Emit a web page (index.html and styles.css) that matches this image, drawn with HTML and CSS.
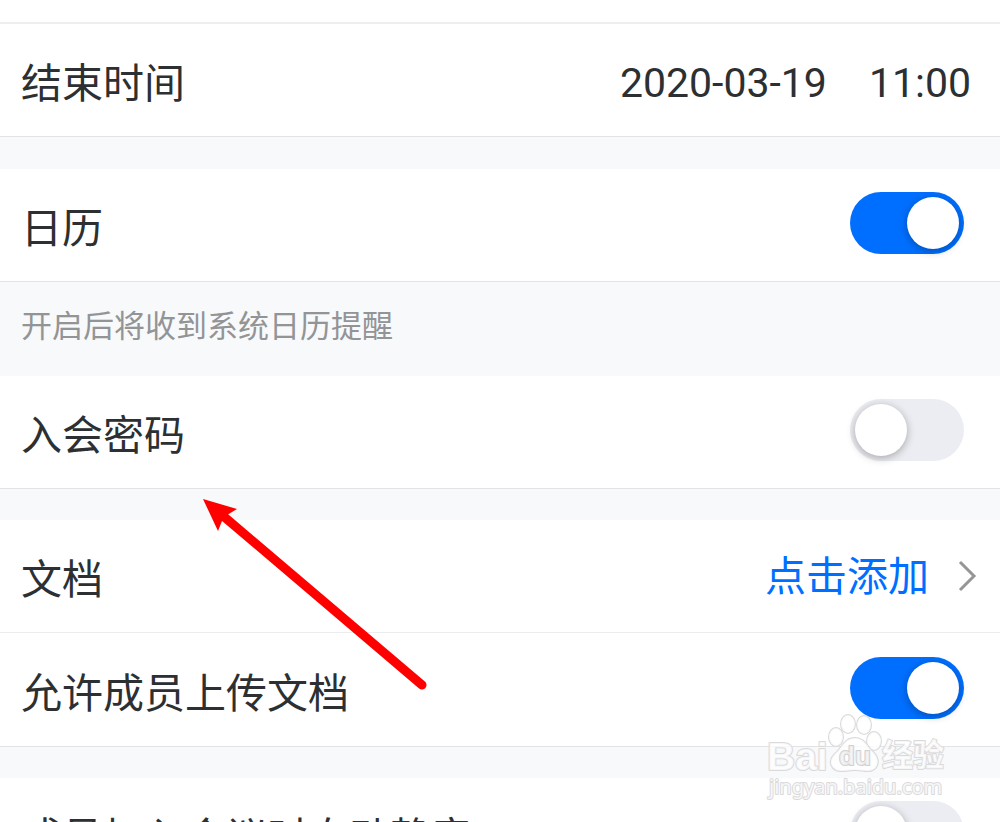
FILE: index.html
```html
<!DOCTYPE html>
<html lang="zh-CN">
<head>
<meta charset="utf-8">
<meta name="viewport" content="width=device-width, initial-scale=1">
<title>会议设置</title>
<link rel="stylesheet" href="styles.css">
</head>
<body>
<main class="screen">
  <section class="group group-first">
    <div class="row">
      <span class="label">结束时间</span>
      <time class="time" datetime="2020-03-19T11:00"><span>2020-03-19</span><span>11:00</span></time>
    </div>
  </section>
  <section class="group">
    <div class="row">
      <label class="label" for="calendar">日历</label>
      <input class="switch" type="checkbox" id="calendar" checked>
    </div>
  </section>
  <p class="hint">开启后将收到系统日历提醒</p>
  <section class="group">
    <div class="row">
      <label class="label" for="password">入会密码</label>
      <input class="switch" type="checkbox" id="password">
    </div>
  </section>
  <section class="group">
    <div class="row">
      <span class="label">文档</span>
      <a class="add" href="#documents"><span class="add-text">点击添加</span><svg class="chevron" viewBox="0 0 20 34" aria-hidden="true"><path d="M2 3l14 14L2 31"/></svg></a>
    </div>
    <div class="row">
      <label class="label" for="upload">允许成员上传文档</label>
      <input class="switch" type="checkbox" id="upload" checked>
    </div>
  </section>
  <section class="group">
    <div class="row">
      <label class="label" for="mute">成员加入会议时自动静音</label>
      <input class="switch" type="checkbox" id="mute">
    </div>
  </section>

  <svg class="arrow" viewBox="0 0 240 200" aria-hidden="true">
    <path class="arrow-line" d="M22 15L222 185"/>
    <path class="arrow-head" d="M3 -1L37 9L27 15L22 21L18 31Z"/>
  </svg>

  <svg class="watermark" viewBox="0 0 190 100" aria-hidden="true">
    <g class="mark">
      <text class="mark-bai" x="7" y="65">Bai</text>
      <ellipse cx="76" cy="32" rx="7" ry="9"/>
      <ellipse cx="88" cy="19" rx="7" ry="9"/>
      <ellipse cx="104" cy="20" rx="7" ry="9"/>
      <ellipse cx="114" cy="36" rx="7" ry="9"/>
      <path d="M95 33C85 33 82 42 77 47C65 57 73 66 81 66C87 66 90 65 95 65C100 65 103 66 108 66C117 66 122 56 113 47C107 42 105 33 95 33Z"/>
      <text class="mark-du" x="79" y="60">du</text>
      <text class="mark-name" x="122" y="61">经验</text>
      <text class="mark-url" x="9" y="89">jingyan.baidu.com</text>
    </g>
  </svg>
</main>
</body>
</html>
```
FILE: styles.css
```css
body {
  margin: 0;
  overflow: hidden;
  background: #f7f9fb;
  color: #2c3033;
  font-family: "Noto Sans CJK SC", sans-serif;
  font-size: 41px;
  line-height: 60px;
}

.screen {
  position: relative;
  display: flex;
  flex-direction: column;
  height: 100vh;
  overflow: hidden;
}

.group {
  flex: none;
  margin-bottom: 31px;
  background: #fff;
  border-bottom: 1px solid #e2e3e7;
}

.group-first {
  margin-bottom: 32px;
  padding-top: 22px;
}

.row {
  display: flex;
  align-items: center;
  justify-content: space-between;
  box-sizing: border-box;
  min-height: 112px;
  padding: 0 22px 0 21px;
}

.group-first .row {
  min-height: 114px;
  border-top: 2px solid #eeeeef;
}

.row + .row {
  min-height: 114px;
  border-top: 1px solid #ececee;
}

.time {
  display: flex;
  gap: 42px;
  padding: 6px 7px 0 0;
  font-family: Roboto, sans-serif;
}

.hint {
  margin: -31px 0 0;
  padding: 20px 21px 30px;
  color: #939496;
  font-size: 31px;
  line-height: 44px;
}

.switch {
  appearance: none;
  display: flex;
  flex: none;
  box-sizing: border-box;
  width: 114px;
  height: 62px;
  margin: 0 14px 4px 0;
  padding: 5px;
  border-radius: 31px;
  background: #ecedf2;
}

.switch::before {
  content: "";
  width: 52px;
  height: 52px;
  border-radius: 50%;
  background: #fff;
  box-shadow: 0 2px 9px rgba(0, 0, 0, 0.3);
}

.switch:checked {
  justify-content: flex-end;
  background: #006fff;
}

.add {
  display: flex;
  align-items: center;
  gap: 29px;
  color: #006fff;
  text-decoration: none;
}

.add-text {
  padding-bottom: 6px;
}

.chevron {
  width: 20px;
  height: 34px;
  fill: none;
  stroke: #959697;
  stroke-width: 3;
}

.arrow {
  position: absolute;
  left: 200px;
  top: 500px;
  width: 240px;
  height: 200px;
  overflow: visible;
  pointer-events: none;
}

.arrow-line {
  fill: none;
  stroke: #f00;
  stroke-width: 9;
  stroke-linecap: round;
}

.arrow-head {
  fill: #f00;
}

.watermark {
  position: absolute;
  left: 760px;
  top: 705px;
  width: 190px;
  height: 100px;
  pointer-events: none;
}

.mark {
  fill: #fff;
  fill-opacity: 0.8;
  stroke: #dadadc;
  stroke-width: 2;
  stroke-linejoin: round;
  paint-order: stroke;
  font-family: "Liberation Sans", sans-serif;
}

.mark-bai {
  font-size: 39px;
  font-weight: 700;
}

.mark-du {
  fill: #f4f4f5;
  stroke: #d0d0d2;
  font-size: 26px;
  font-weight: 700;
}

.mark-name {
  font-family: "Noto Sans CJK SC", sans-serif;
  font-size: 31px;
  font-weight: 700;
}

.mark-url {
  font-family: "Noto Sans", sans-serif;
  font-size: 20px;
}
```
